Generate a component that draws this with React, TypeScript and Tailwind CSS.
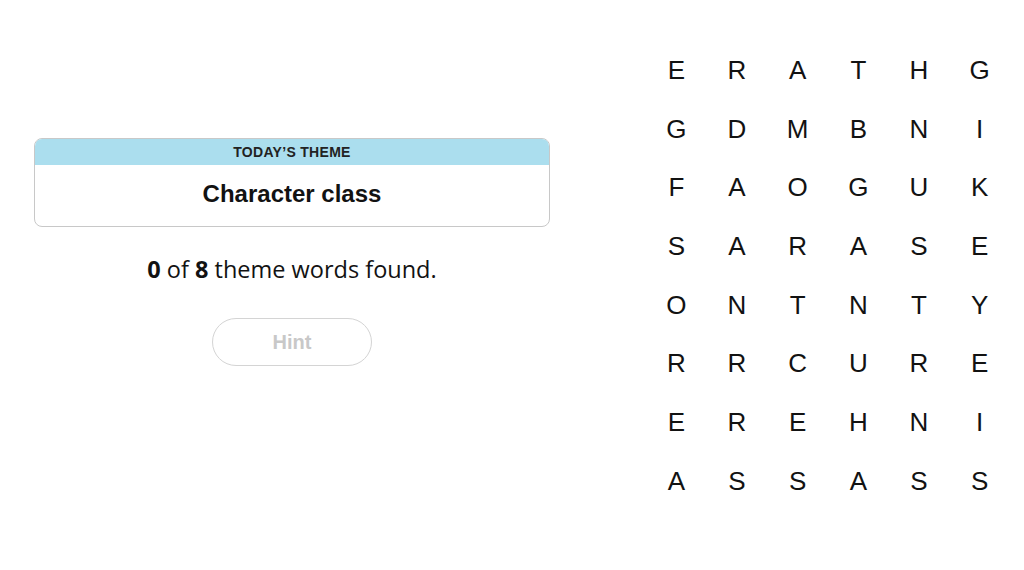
import React from 'react';

const rows = [
  'ERATHG',
  'GDMBNI',
  'FAOGUK',
  'SARASE',
  'ONTNTY',
  'RRCURE',
  'EREHNI',
  'ASSASS',
];

export default function App() {
  return (
    <div className="flex h-[570px] w-[1024px] bg-white text-[#121212] font-['Liberation_Sans',sans-serif]">
      {/* left: theme card + progress */}
      <div className="ml-[34px] mt-[138px] flex w-[516px] flex-col items-center">
        <div className="w-full overflow-hidden rounded-lg border border-[#c8c8c8]">
          <div className="flex h-[26px] items-center justify-center bg-[#abdeee] text-[14px] font-semibold tracking-[0.3px] text-[#222]">
            TODAY’S THEME
          </div>
          <div className="flex h-[61px] items-center justify-center pb-[3px] text-[24px] font-bold">
            Character class
          </div>
        </div>
        <p className="mt-[28px] font-['Open_Sans',sans-serif] text-[23.5px] leading-[28px]">
          <b>0</b> of <b>8</b> theme words found.
        </p>
        <button
          type="button"
          className="mt-[35px] flex h-[48px] w-[160px] items-center justify-center rounded-full border-[1.5px] border-[#d4d4d4] text-[20px] font-bold text-[#c8c8c8]"
        >
          Hint
        </button>
      </div>

      {/* right: letter grid */}
      <div className="ml-[96px] mt-[41px] grid h-fit w-[364px] grid-cols-6">
        {rows.map((row, r) =>
          row.split('').map((ch, c) => (
            <div
              key={`${r}-${c}`}
              className="flex h-[58.7px] items-center justify-center text-[26px]"
            >
              {ch}
            </div>
          ))
        )}
      </div>
    </div>
  );
}
